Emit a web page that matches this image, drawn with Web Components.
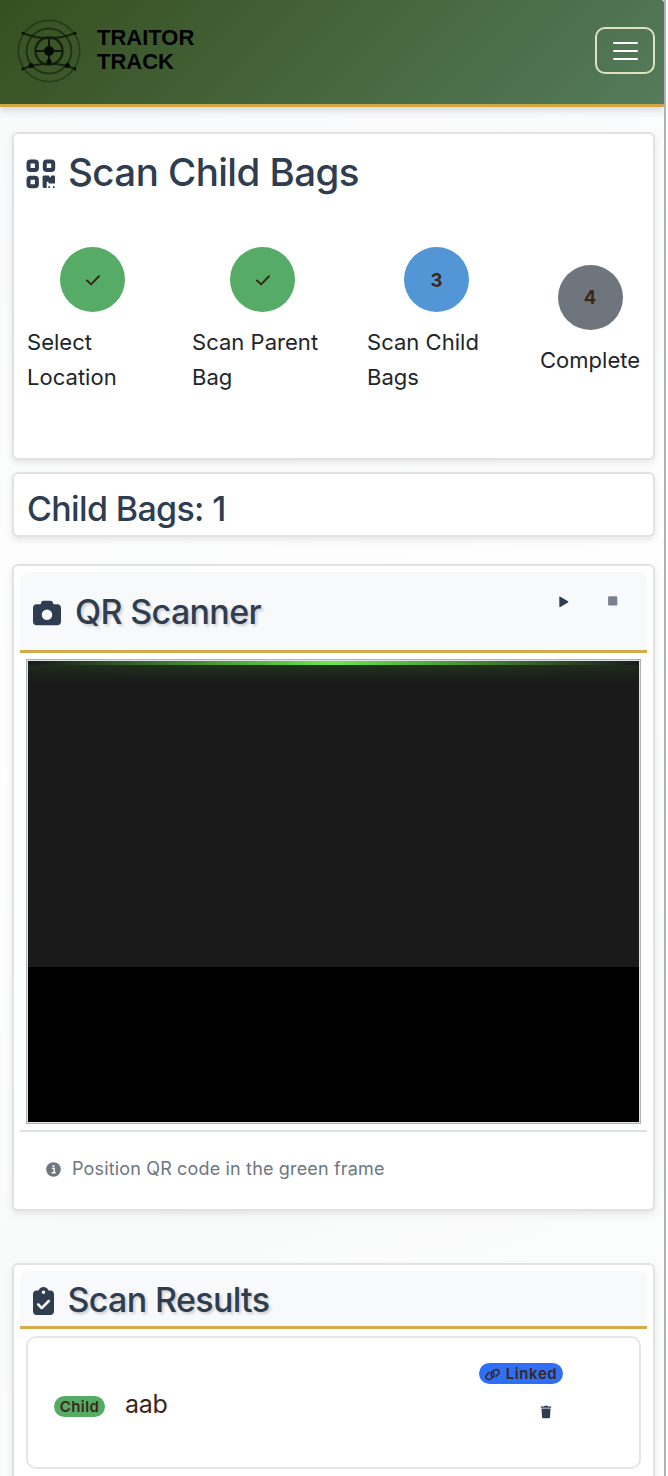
<!DOCTYPE html>
<html lang="en">
<head>
<meta charset="utf-8">
<title>Traitor Track</title>
<style>
html,body{margin:0;padding:0;height:1476px;overflow:hidden;background:#fff}
body{font-family:Inter,"Liberation Sans",sans-serif;color:#212529}
</style>
</head>
<body>
<tt-app></tt-app>
<script>
const define = (name, html) => customElements.define(name, class extends HTMLElement {
  constructor() {
    super();
    this.attachShadow({ mode: 'open' }).innerHTML = html;
  }
});

const icons = {
  qr: ['0 0 30 30', '<g fill="none" stroke="currentColor" stroke-width="4"><rect x="2.500" y="2.500" width="8.400" height="8.400" rx="2"/><rect x="18.800" y="2.500" width="8.400" height="8.400" rx="2"/><rect x="2.500" y="18.800" width="8.400" height="8.400" rx="2"/></g><path d="M16.600 18q0-1.400 1.400-1.400h4.600q1 0 1 1.600h1.200q0-1.600 1-1.600h2.200q1 0 1 1.200v5.600q0 1.200-1.200 1.200h-4.500q-1 0-1-1.800h-1.600v6.100h-2.700q-1.400 0-1.400-1.400z"/><path d="M22.300 27.200h1.700v1.700h-1.700zM26.900 27.200h1.700v1.700h-1.700z"/>'],
  camera: ['0 0 512 512', '<path d="M149.100 64.800L138.700 96H64c-35.300 0-64 28.700-64 64V416c0 35.300 28.700 64 64 64H448c35.300 0 64-28.700 64-64V160c0-35.300-28.700-64-64-64H373.300L362.900 64.800C356.400 45.200 338.100 32 317.400 32H194.600c-20.700 0-39 13.200-45.500 32.800zM256 192a96 96 0 1 1 0 192 96 96 0 1 1 0-192z"/>'],
  check: ['0 0 16 14', '<path d="M2 7.500 6.100 11.400 14 3.200" fill="none" stroke="currentColor" stroke-width="2" stroke-linecap="round" stroke-linejoin="round"/>'],
  play: ['0 0 10 12', '<path d="M.3 1.300Q.3.200 1.400.700L9 5.200Q9.800 5.800 9 6.400L1.400 10.900Q.3 11.400.3 10.300z"/>'],
  stop: ['0 0 10 10', '<rect x=".1" y=".3" width="9.200" height="9.200" rx="1.300"/>'],
  info: ['0 0 16 16', '<circle cx="8" cy="8" r="7.800"/><path d="M6.300 6.800h2.400v4.200M6 11.400h4.300" fill="none" stroke="#fff" stroke-width="1.500"/><circle cx="8" cy="4.400" r="1.100" fill="#fff"/>'],
  clipboard: ['0 0 384 512', '<path fill-rule="evenodd" d="M192 0c-41.800 0-77.400 26.700-90.500 64H64C28.700 64 0 92.700 0 128V448c0 35.300 28.700 64 64 64H320c35.300 0 64-28.700 64-64V128c0-35.300-28.700-64-64-64H282.500C269.400 26.700 233.800 0 192 0zm0 64a32 32 0 1 1 0 64 32 32 0 1 1 0-64zM305 273L177 401c-9.400 9.400-24.600 9.400-33.900 0L79 337c-9.400-9.400-9.400-24.600 0-33.900s24.600-9.400 33.900 0l47 47L271 239c9.400-9.400 24.600-9.400 33.900 0s9.400 24.600 0 33.900z"/>'],
  link: ['0 0 16 14', '<g fill="none" stroke="currentColor" stroke-width="1.600" stroke-linecap="round"><path d="M8.800 9.600C6.500 9 5.600 6.300 7.200 4.700L9.400 2.700C10.900 1.400 13 1.400 14.200 2.500 15.400 3.800 15.200 5.800 13.900 7L11.700 9"/><path d="M7.200 4.400C9.500 5 10.400 7.700 8.800 9.300L6.600 11.300C5.100 12.600 3 12.600 1.800 11.500.6 10.200.8 8.200 2.100 7L4.300 5"/></g>'],
  trash: ['0 0 12 14', '<path d="M.8 1.600h3L4.600.7h2.800L8.200 1.600h3v1.200H.8zM1.500 3.500h9l-.5 8.500q-.1 1.200-1.200 1.200H3.200q-1.100 0-1.200-1.200z"/>']
};
customElements.define('tt-icon', class extends HTMLElement {
  constructor() {
    super();
    const [box, art] = icons[this.getAttribute('name')];
    this.attachShadow({ mode: 'open' }).innerHTML =
      `<style>:host{display:block;flex:none}svg{display:block;width:100%;height:100%;overflow:visible}</style>
       <svg viewBox="${box}" fill="currentColor">${art}</svg>`;
  }
});

define('tt-logo', `
<style>
:host{display:flex;align-items:center;gap:15px;color:#000}
svg{display:block;width:66px;height:66px;margin-top:2px}
div{font:700 22px/24px "Liberation Sans",sans-serif;padding-bottom:1px}
p{margin:0}
</style>
<svg viewBox="0 0 66 66" fill="none" stroke="#10180c">
<circle cx="33" cy="33" r="30.600" stroke-width="1.800" opacity=".42"/>
<circle cx="33" cy="33" r="22.400" stroke-width="2" opacity=".6"/>
<circle cx="33" cy="33" r="13.600" stroke-width="2.300" opacity=".85"/>
<path d="M33 20v26M20 33h26" stroke-width="2"/>
<path d="M6.500 15Q33 25.500 59.500 15M6.500 51Q33 40.500 59.500 51" stroke-width="1.900" opacity=".85"/>
<g fill="#060a04" stroke="none"><circle cx="33" cy="33" r="5"/><circle cx="33" cy="43.500" r="2.500"/><circle cx="15" cy="47.500" r="2.500"/><circle cx="51.500" cy="47.500" r="2.500"/><circle cx="7" cy="15.200" r="1.400"/><circle cx="59" cy="15.200" r="1.400"/><circle cx="7" cy="51" r="1.400"/><circle cx="59" cy="51" r="1.400"/></g>
</svg><div><p>TRAITOR</p><p>TRACK</p></div>`);

define('tt-header', `
<style>
:host{display:flex;box-sizing:border-box;height:107px;padding:0 9px 4px 16px;align-items:center;justify-content:space-between;border-bottom:3px solid #d3a644;background:linear-gradient(135deg,#36501f 0%,#557b5b 100%);box-shadow:0 3px 9px rgba(44,62,80,.2);border-top-right-radius:3px;position:relative}
button{display:flex;box-sizing:border-box;flex-direction:column;align-items:center;justify-content:center;gap:6px;width:60px;height:47px;margin-top:1px;padding:0;border:2px solid #dfe0bf;border-radius:10px;background:none}
i{display:block;width:25px;height:2px;border-radius:1px;background:#fff}
</style>
<tt-logo></tt-logo><button aria-label="Menu"><i></i><i></i><i></i></button>`);

define('tt-card', `
<style>
:host{display:block;box-sizing:border-box;border:2px solid #e2e2e3;border-radius:6px;background:#fff;box-shadow:0 3px 7px rgba(0,0,0,.09)}
</style><slot></slot>`);

define('tt-heading', `
<style>
:host{display:flex;align-items:center;color:#2f3d50;font-weight:500;white-space:nowrap}
</style><slot name="icon"></slot><span><slot></slot></span>`);

define('tt-panel-head', `
<style>
:host{display:flex;box-sizing:border-box;background:#f8f9fb;border-bottom:3px solid #d7ab4c;border-radius:8px 8px 0 0;color:#2f3d50}
::slotted(tt-heading){text-shadow:2px 2px 3px rgba(0,0,0,.18)}
</style><slot></slot>`);

define('tt-step', `
<style>
:host{display:flex;flex-direction:column;align-items:center}
.dot{display:flex;align-items:center;justify-content:center;width:65px;height:65px;border-radius:50%;background:var(--dot);color:#3b2718;font-weight:700;font-size:18.500px}
.label{align-self:stretch;margin-top:13px;font-size:22px;line-height:35px;white-space:nowrap;letter-spacing:.03px}
</style><div class="dot"><slot name="mark"></slot></div><div class="label"><slot></slot></div>`);

define('tt-viewfinder', `
<style>
:host{display:flex;flex-direction:column;box-sizing:border-box;height:465px;border:1px solid #adb2b8;padding:1px;background:#dfe3e8}
.beam{height:4px;background:linear-gradient(90deg,#1a1a1a,#6be748 50%,#1a1a1a)}
.glow{height:17px;background:linear-gradient(90deg,rgba(26,26,26,.35),transparent 30%,transparent 70%,rgba(26,26,26,.35)),linear-gradient(#20331c,#1a1a1a)}
.feed{height:285px;background:#1a1a1a}
.rest{flex:1;background:#000}
</style><div class="beam"></div><div class="glow"></div><div class="feed"></div><div class="rest"></div>`);

define('tt-badge', `
<style>
:host{display:flex;box-sizing:border-box;align-items:center;justify-content:center;height:21px;border-radius:10.500px;color:#3b2718;font-weight:600;font-size:15px;white-space:nowrap}
</style><slot></slot>`);

define('tt-result', `
<style>
:host{display:flex;box-sizing:border-box;height:133px;padding:0 76px 0 26px;align-items:center;border:2px solid #e3e6ea;border-radius:10px;background:#fff}
.child{width:51px;background:#56ab67;margin-top:8px;letter-spacing:.4px}
.name{margin:2px auto 0 20px;font-size:25px;color:#3b2718;letter-spacing:-.3px}
.side{display:flex;flex-direction:column;align-items:flex-end;align-self:flex-start;padding-top:25px;gap:21px}
.linked{width:84px;background:#2f6ef6;gap:6px;letter-spacing:.6px}
.linked tt-icon{width:15px;height:13px;margin-top:1px}
.side>tt-icon{width:12px;height:14px;margin-right:11px;color:#2f3d50}
</style>
<tt-badge class="child">Child</tt-badge><div class="name">aab</div>
<div class="side"><tt-badge class="linked"><tt-icon name="link"></tt-icon><span>Linked</span></tt-badge><tt-icon name="trash"></tt-icon></div>`);

define('tt-app', `
<style>
:host{display:flex;flex-direction:column;box-sizing:border-box;width:666px;height:1476px;overflow:hidden;border-right:2px solid #b1b2b3;background:linear-gradient(160deg,#f8f9fa 0%,#fefefe 45%,#f9fbfa 75%,#fdfdfd 100%)}
tt-header,tt-card{flex:none}
tt-card{margin:0 9px 0 12px}
.title{height:328px;margin-top:25px}
.title tt-heading{padding:18px 0 0 12px;height:40px;line-height:40px;font-size:38.500px;letter-spacing:-.56px}
.title tt-icon[slot=icon]{width:30px;height:30px;margin:3px 12px 0 0}
.steps{display:grid;grid-template-columns:131px 141px 139px 100px;gap:34px;align-items:center;margin:55px 0 0 13px}
.steps tt-icon{width:16px;height:14px}
.count{height:65px;margin-top:12px}
.count tt-heading{padding-left:13px;height:68px;font-size:34px;letter-spacing:-.65px}
.scanner{height:647px;margin-top:27px;padding:6px}
.scanner tt-panel-head{height:81px;padding:0 29px 0 13px;justify-content:space-between}
.scanner tt-heading,.results tt-heading{font-size:34px;letter-spacing:-.65px}
.scanner tt-heading tt-icon{width:28px;height:28px;margin:3px 14px 0 0}
.tools{display:flex;gap:39px;padding-top:24px}
.tools tt-icon{width:10px;height:12px}
.tools tt-icon+tt-icon{width:10px;height:10px;color:#7a828f}
tt-viewfinder{margin:6px 6px 0}
.hint{display:flex;align-items:center;margin-top:6px;height:73px;border-top:2px solid #dfe0e1;padding-left:25.500px;color:#6e7680;font-size:18px;letter-spacing:.16px}
.hint tt-icon{width:15px;height:15px;margin-right:11.500px;margin-top:1px}
.results{height:300px;margin-top:52px;padding:6px}
.results tt-panel-head{height:58px;padding:2px 0 0 13px}
.results tt-heading tt-icon{width:21px;height:28px;margin:3px 13.500px 0 0}
tt-result{margin:7px 6px 0}
</style>
<tt-header></tt-header>
<tt-card class="title">
<tt-heading><tt-icon slot="icon" name="qr"></tt-icon>Scan Child Bags</tt-heading>
<div class="steps">
<tt-step style="--dot:#56ab67"><tt-icon slot="mark" name="check"></tt-icon>Select<br>Location</tt-step>
<tt-step style="--dot:#56ab67"><tt-icon slot="mark" name="check"></tt-icon>Scan Parent<br>Bag</tt-step>
<tt-step style="--dot:#5296d6"><span slot="mark">3</span>Scan Child<br>Bags</tt-step>
<tt-step style="--dot:#6e757d"><span slot="mark">4</span>Complete</tt-step>
</div>
</tt-card>
<tt-card class="count"><tt-heading>Child Bags: 1</tt-heading></tt-card>
<tt-card class="scanner">
<tt-panel-head><tt-heading><tt-icon slot="icon" name="camera"></tt-icon>QR Scanner</tt-heading>
<div class="tools"><tt-icon name="play"></tt-icon><tt-icon name="stop"></tt-icon></div></tt-panel-head>
<tt-viewfinder></tt-viewfinder>
<div class="hint"><tt-icon name="info"></tt-icon><span>Position QR code in the green frame</span></div>
</tt-card>
<tt-card class="results">
<tt-panel-head><tt-heading><tt-icon slot="icon" name="clipboard"></tt-icon>Scan Results</tt-heading></tt-panel-head>
<tt-result></tt-result>
</tt-card>`);
</script>
</body>
</html>
